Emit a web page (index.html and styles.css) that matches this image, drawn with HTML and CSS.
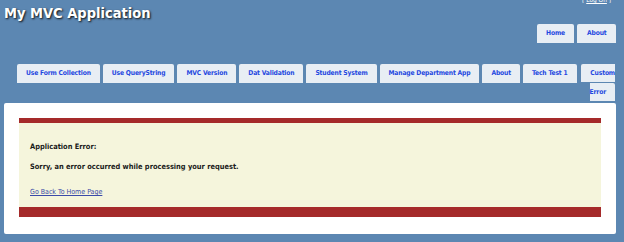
FILE: index.html
```html
<!DOCTYPE html>
<html>
<head>
<meta charset="utf-8">
<title>Error</title>
<link rel="stylesheet" href="styles.css">
</head>
<body>
<div class="page">
  <header class="header">
    <h1 class="title">My MVC Application</h1>
    <div class="header-right">
      <div class="login">[ <a href="#">Log On</a> ]</div>
      <ul class="top-menu">
        <li><a href="#">Home</a></li>
        <li><a href="#">About</a></li>
      </ul>
    </div>
  </header>
  <ul class="tabs">
    <li><a href="#">Use Form Collection</a></li>
    <li><a href="#">Use QueryString</a></li>
    <li><a href="#">MVC Version</a></li>
    <li><a href="#">Dat Validation</a></li>
    <li><a href="#">Student System</a></li>
    <li><a href="#">Manage Department App</a></li>
    <li><a href="#">About</a></li>
    <li><a href="#">Tech Test 1</a></li>
    <li class="tab-last"><a href="#">Custom Error</a></li>
  </ul>
  <main class="main">
    <div class="error-box">
      <p class="error-title">Application Error:</p>
      <p class="error-msg">Sorry, an error occurred while processing your request.</p>
      <a class="home-link" href="#">Go Back To Home Page</a>
    </div>
  </main>
</div>
</body>
</html>
```
FILE: styles.css
```css
html, body {
  margin: 0;
  padding: 0;
}
body {
  background: #5c87b2;
  font-family: "DejaVu Sans Condensed", "DejaVu Sans", sans-serif;
  font-size: 7.4px;
  width: 624px;
  height: 242px;
  overflow: hidden;
}
.page {
  width: 612px;
  margin-left: 4px;
  overflow: hidden;
}
.header {
  display: flex;
  justify-content: space-between;
  align-items: flex-start;
  height: 64px;
}
.title {
  margin: 3px 0 0;
  font-size: 14.5px;
  line-height: 20px;
  color: #fff;
  font-weight: bold;
  text-shadow: 1px 1px 2px #111;
}
.header-right {
  display: flex;
  flex-direction: column;
  align-items: flex-end;
}
.login {
  margin-top: -4px;
  margin-right: 5px;
  color: #fff;
  font-size: 6.5px;
  line-height: 9px;
}
.login a {
  color: #fff;
}
.top-menu,
.tabs {
  display: flex;
  gap: 3px;
  padding: 0;
  list-style: none;
  font-size: 6.7px;
  line-height: 19px;
  letter-spacing: -0.15px;
}
.top-menu {
  margin: 19px 0 0;
}
.top-menu a,
.tabs a {
  display: block;
  background: #e8eef4;
  color: #1f48e0;
  font-weight: bold;
  text-decoration: none;
  padding: 0 9px;
  border-radius: 2px 2px 0 0;
}
.top-menu a {
  padding: 0 9.5px;
}
.tabs {
  margin: 0;
  padding: 0 1px 0 13px;
}
.tabs li {
  flex: none;
}
.tabs .tab-last {
  flex: 1 1 0;
  min-width: 0;
  text-align: right;
}
.tabs .tab-last a {
  display: inline;
  padding: 5px 9px;
}
.main {
  margin-top: 1px;
  background: #fff;
  padding: 15px 15px 17px;
  border-radius: 2px;
}
.error-box {
  background: #f5f5dc;
  border-top: 5px solid #a52a2a;
  border-bottom: 10px solid #a52a2a;
  padding: 18px 11px 9px;
  color: #1a1a1a;
}
.error-title,
.error-msg {
  margin: 0;
  font-weight: bold;
  line-height: 12px;
}
.error-title {
  margin-bottom: 8px;
}
.error-msg {
  margin-bottom: 13px;
}
.home-link {
  display: block;
  width: max-content;
  font-size: 7px;
  line-height: 12px;
  color: #3b4aa8;
  font-weight: normal;
}
```
